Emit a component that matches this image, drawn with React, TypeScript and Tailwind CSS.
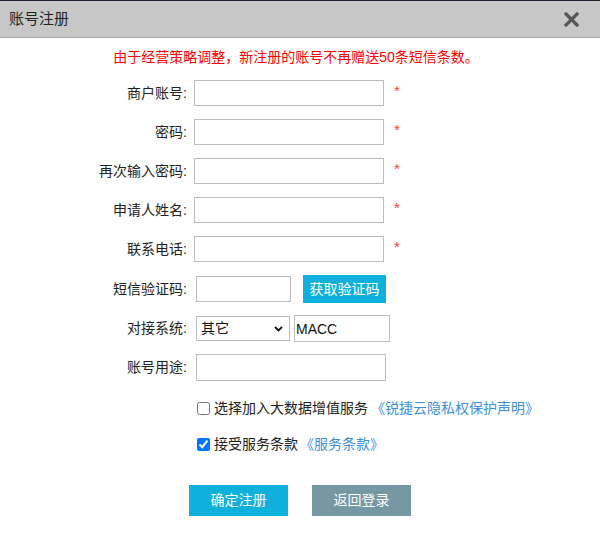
import React from "react";

const font = { fontFamily: '"Liberation Sans", "Noto Sans CJK SC", sans-serif' };

function Star() {
  return <span className="relative top-[-3px] ml-[10px] text-[15px] leading-none text-[#ff3b3b]">*</span>;
}

function Row({ label, children, inputMl = "ml-[7px]" }: { label: string; children: React.ReactNode; inputMl?: string }) {
  return (
    <div className="flex items-center">
      <div className="w-[187px] shrink-0 text-right text-[14px] text-[#222]">{label}</div>
      <div className={`${inputMl} flex items-center`}>{children}</div>
    </div>
  );
}

export default function App() {
  const textInput = "h-[26px] w-[190px] border border-[#bcbcbc] bg-white outline-none px-1 text-[14px]";
  return (
    <div style={font} className="w-[600px] h-[534px] bg-white overflow-hidden">
      <div className="h-[38px] border-t border-t-[#1b2230] border-b border-b-[#a7a7a7] bg-[#c7c7c7] flex items-center justify-between pl-[9px] pr-[21px]">
        <span className="text-[15px] text-[#222]">账号注册</span>
        <svg width="15" height="15" viewBox="0 0 15 15" className="mt-[1px]">
          <path d="M2 2 L13 13 M13 2 L2 13" stroke="#555" strokeWidth="3.2" strokeLinecap="square" />
        </svg>
      </div>

      <div className="mt-[9px] h-[20px] leading-[20px] text-center text-[14px] text-[#ff0000]">
        <span className="relative left-[-4px]">由于经营策略调整，新注册的账号不再赠送50条短信条数。</span>
      </div>

      <div className="mt-[13px] flex flex-col">
        <div className="flex flex-col gap-[13px]">
          <Row label="商户账号:">
            <input className={textInput} />
            <Star />
          </Row>
          <Row label="密码:">
            <input className={textInput} type="password" />
            <Star />
          </Row>
          <Row label="再次输入密码:">
            <input className={textInput} type="password" />
            <Star />
          </Row>
          <Row label="申请人姓名:">
            <input className={textInput} />
            <Star />
          </Row>
          <Row label="联系电话:">
            <input className={textInput} />
            <Star />
          </Row>
        </div>

        <div className="mt-[13px] h-[28px]">
          <Row label="短信验证码:" inputMl="ml-[9px]">
            <input className="h-[26px] w-[95px] border border-[#bcbcbc] bg-white outline-none" />
            <button className="ml-[12px] h-[28px] w-[83px] bg-[#10b0dc] text-white text-[14px]">获取验证码</button>
          </Row>
        </div>

        <div className="mt-[12px] h-[27px]">
          <Row label="对接系统:" inputMl="ml-[9px]">
            <div className="relative h-[25px] w-[94px] border border-[#bcbcbc] bg-white flex items-center">
              <span className="pl-[4px] text-[14px] text-[#111]">其它</span>
              <svg className="absolute right-[6px] top-[9px]" width="9" height="6" viewBox="0 0 9 6">
                <path d="M1 1 L4.5 4.5 L8 1" stroke="#111" strokeWidth="1.8" fill="none" />
              </svg>
            </div>
            <input
              className="ml-[4px] h-[27px] w-[96px] border border-[#bcbcbc] bg-white outline-none pl-[1px] text-[14px] text-[#111]"
              defaultValue="MACC"
            />
          </Row>
        </div>

        <div className="mt-[12px] h-[27px]">
          <Row label="账号用途:" inputMl="ml-[9px]">
            <input className="h-[27px] w-[190px] border border-[#bcbcbc] bg-white outline-none" />
          </Row>
        </div>

        <div className="mt-[17px] h-[20px] flex items-center pl-[197px] text-[14px]">
          <input type="checkbox" className="m-0 w-[13px] h-[13px]" />
          <span className="ml-[4px] text-[#222]">选择加入大数据增值服务</span>
          <span className="ml-[3px] text-[#3d8fd9]">《锐捷云隐私权保护声明》</span>
        </div>

        <div className="mt-[16px] h-[20px] flex items-center pl-[197px] text-[14px]">
          <input type="checkbox" defaultChecked className="m-0 w-[13px] h-[13px]" />
          <span className="ml-[4px] text-[#222]">接受服务条款</span>
          <span className="ml-[2px] text-[#3d8fd9]">《服务条款》</span>
        </div>

        <div className="mt-[31px] flex pl-[189px] gap-[24px]">
          <button className="h-[31px] w-[99px] bg-[#10b0dc] text-white text-[14px]">确定注册</button>
          <button className="h-[31px] w-[99px] bg-[#7598a4] text-white text-[14px]">返回登录</button>
        </div>
      </div>
    </div>
  );
}
